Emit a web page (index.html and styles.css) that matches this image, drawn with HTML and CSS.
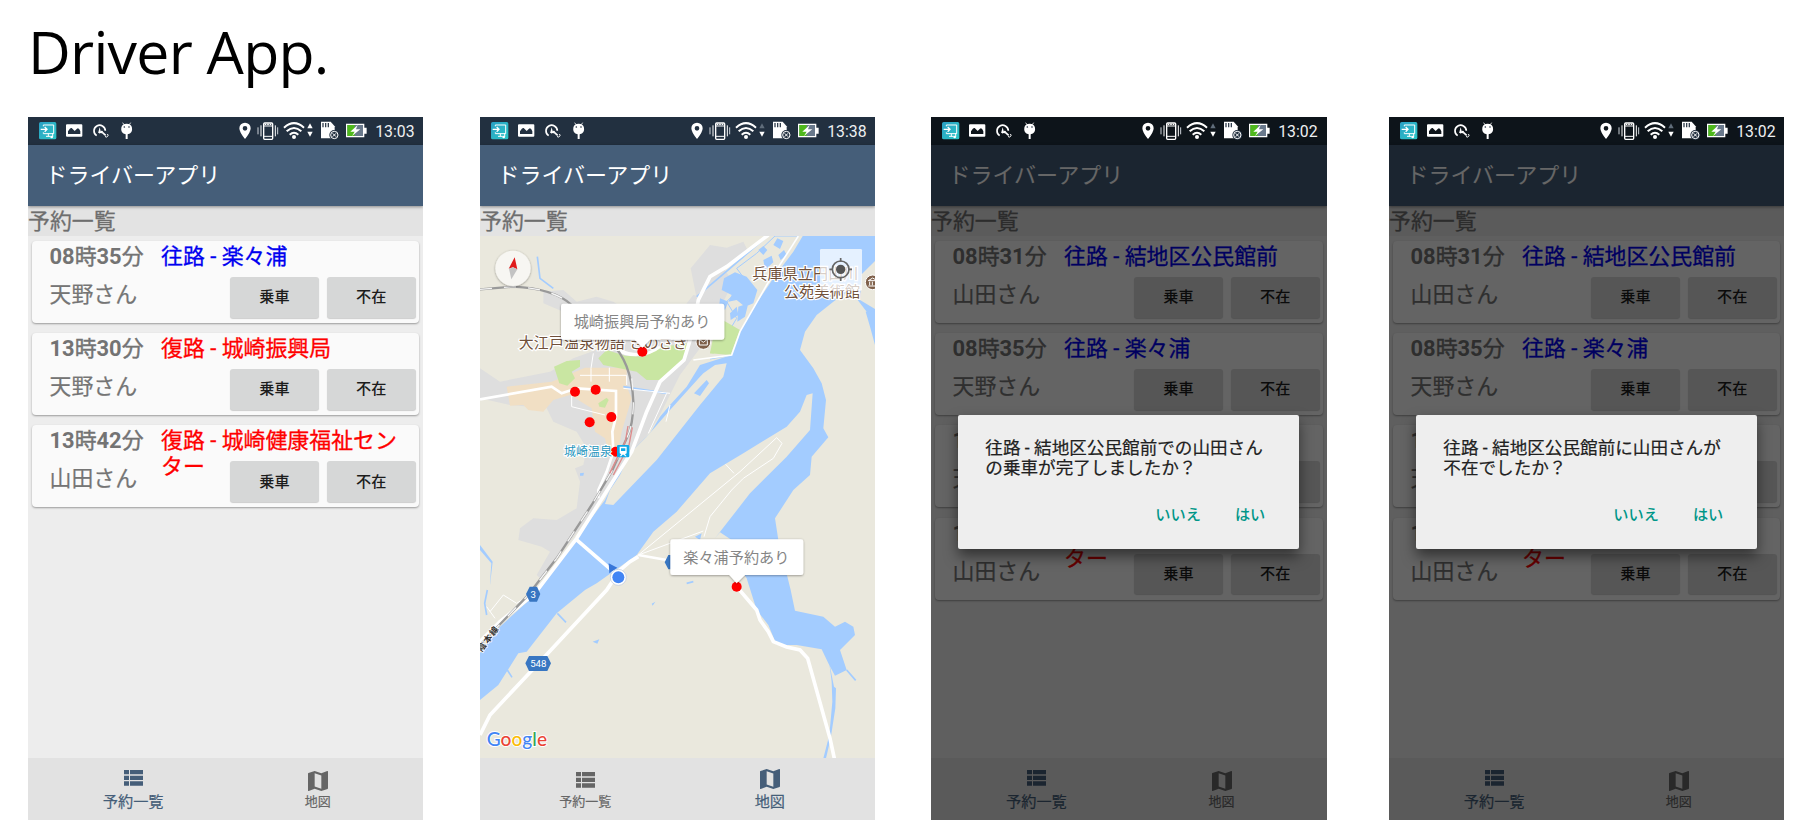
FILE: index.html
```html
<!DOCTYPE html>
<html lang="ja">
<head>
<meta charset="utf-8">
<title>Driver App.</title>
<link rel="stylesheet" href="styles.css">
</head>
<body>
<svg class="defs" width="0" height="0" aria-hidden="true">
  <defs>
    <linearGradient id="teal" x1="0" y1="0" x2="1" y2="1"><stop offset="0" stop-color="#2a9fc4"/><stop offset="1" stop-color="#2bc6c6"/></linearGradient>
    <symbol id="status-left" viewBox="0 0 330 82">
      <rect x="33" y="15" width="52" height="52" rx="5" fill="url(#teal)"/>
      <path d="M46 28V24H77V50H46V46M54 58H68M61 50V58" fill="none" stroke="#fff" stroke-width="3"/>
      <path d="M38 37H56M50 30L57 37L50 44" fill="none" stroke="#fff" stroke-width="4"/>
      <circle cx="71" cy="60" r="4" fill="#fff"/><path d="M74 60V48" stroke="#fff" stroke-width="3"/>
      <path fill="#fff" fill-rule="evenodd" d="M117 22H160Q163 22 163 25V56Q163 59 160 59H117Q114 59 114 56V25Q114 22 117 22ZM120 51H157V43Q152 30 147 35L140 42L131 33Q127 31 120 43Z"/>
      <path d="M206 56A17 17 0 1 1 232 41" fill="none" stroke="#fff" stroke-width="5"/>
      <path d="M215 31L211 46Q215 53 219 46Z" fill="#fff"/>
      <path d="M223 46L233 55" stroke="#fff" stroke-width="5"/>
      <circle cx="221" cy="45" r="4" fill="#fff"/><path d="M238 51A5 5 0 1 1 231 58" fill="none" stroke="#fff" stroke-width="3"/>
      <path d="M280 32Q282 20 296 20Q310 20 312 32Q315 48 299 52V66H293V52Q277 48 280 32Z" fill="#fff"/>
      <path d="M284 17L288 23M308 17L304 23" stroke="#fff" stroke-width="2.5"/>
      <circle cx="289" cy="30" r="2.5" fill="#223040"/><circle cx="303" cy="30" r="2.5" fill="#223040"/>
    </symbol>
    <symbol id="status-right" viewBox="620 0 405 82">
      <path fill="#fff" fill-rule="evenodd" d="M650 17A17 17 0 0 1 667 34Q667 46 650 66Q633 46 633 34A17 17 0 0 1 650 17ZM650 27A7 7 0 1 0 650 41A7 7 0 1 0 650 27Z"/>
      <rect x="706" y="18" width="27" height="49" rx="3" fill="none" stroke="#fff" stroke-width="4"/>
      <path d="M706 27H733M706 58H733" stroke="#fff" stroke-width="3"/>
      <path d="M709 22H729" stroke="#fff" stroke-width="4" stroke-dasharray="5 2.5"/>
      <path d="M698 25V58M741 25V58" stroke="#fff" stroke-width="3"/>
      <path d="M689 31V52M748 31V52" stroke="#cfd4da" stroke-width="3"/>
      <g fill="none" stroke="#fff" stroke-width="6"><path d="M767 32Q797 5 827 32"/><path d="M775 43Q797 23 819 43"/><path d="M784 53Q797 42 810 53"/></g>
      <circle cx="797" cy="60" r="6" fill="#fff"/>
      <path class="uplink" d="M845 19L853 34H837Z"/><path d="M845 59L853 44H837Z" fill="#fff"/>
      <path d="M878 14H907L919 28V64H878Z" fill="#fff"/>
      <path d="M884 18V31M892 18V31M900 18V31" stroke="#33404f" stroke-width="4"/>
      <circle cx="918" cy="54" r="15" fill="#223040"/><circle cx="918" cy="54" r="11" fill="none" stroke="#fff" stroke-width="3"/>
      <path d="M913 49L923 59M923 49L913 59" stroke="#fff" stroke-width="3"/>
      <path d="M955 20H1008V32H1015V50H1008V61H953V20Z" fill="#fff"/>
      <rect x="957" y="24" width="47" height="33" fill="#69798c"/><rect x="957" y="24" width="22" height="33" fill="#4fb81c"/>
      <path d="M988 24L966 44H979L971 57L996 37H983Z" fill="#fff"/>
    </symbol>
    <symbol id="list" viewBox="0 0 57 48"><path fill="currentColor" d="M0 0H15V13H0ZM18 0H57V13H18ZM0 17H15V30H0ZM18 17H57V30H18ZM0 34H15V47H0ZM18 34H57V47H18Z"/></symbol>
    <symbol id="map" viewBox="3 3 18 18"><path fill="currentColor" d="M20.5 3l-.16.03L15 5.1 9 3 3.36 4.9c-.21.07-.36.25-.36.48V20.5c0 .28.22.5.5.5l.16-.03L9 18.9l6 2.1 5.64-1.9c.21-.07.36-.25.36-.48V3.500c0-.28-.22-.5-.5-.5zM15 19l-6-2.11V5l6 2.110V19z"/></symbol>
  </defs>
</svg>

<h1 class="title">Driver App.</h1>
<main class="phones">

  <section class="phone phone-1">
    <div class="status"><svg class="st-l"><use href="#status-left"/></svg><svg class="st-r"><use href="#status-right"/></svg><span class="clock">13:03</span></div>
    <div class="appbar">ドライバーアプリ</div>
    <div class="heading">予約一覧</div>
    <div class="list">
      <article class="card"><div class="time"><b>08</b>時<b>35</b>分</div><div class="route out">往路 - 楽々浦</div><div class="name">天野さん</div><div class="actions"><button>乗車</button><button>不在</button></div></article>
      <article class="card"><div class="time"><b>13</b>時<b>30</b>分</div><div class="route back">復路 - 城崎振興局</div><div class="name">天野さん</div><div class="actions"><button>乗車</button><button>不在</button></div></article>
      <article class="card"><div class="time"><b>13</b>時<b>42</b>分</div><div class="route back">復路 - 城崎健康福祉センター</div><div class="name">山田さん</div><div class="actions"><button>乗車</button><button>不在</button></div></article>
    </div>
    <nav class="nav"><div class="tab active"><svg class="i-list"><use href="#list"/></svg><span>予約一覧</span></div><div class="tab"><svg class="i-map"><use href="#map"/></svg><span>地図</span></div></nav>
  </section>

  <section class="phone phone-2">
    <div class="status"><svg class="st-l"><use href="#status-left"/></svg><svg class="st-r"><use href="#status-right"/></svg><span class="clock">13:38</span></div>
    <div class="appbar">ドライバーアプリ</div>
    <div class="heading">予約一覧</div>
    <svg class="mapview" viewBox="0 3 1185 1566" preserveAspectRatio="none">
      <defs><filter id="sh" x="-10%" y="-20%" width="120%" height="150%"><feDropShadow dx="0" dy="2" stdDeviation="3" flood-opacity=".4"/></filter></defs>
      <rect width="1185" height="1570" fill="#eae8dd"/>
      <!-- built-up land -->
      <g fill="#dedede">
        <path d="M632 100L690 30L740 38L790 20L805 50L730 100L760 140L700 260L660 340L600 420L540 540L450 680L370 790L270 920L185 1035L170 1020L210 950L185 935L115 915L120 880L160 850L230 855L290 820L300 740L285 700L310 690L320 640L290 590L220 560L200 520L90 510L0 490V400L60 440L210 410L280 370L390 330L500 300L650 190Z"/>
        <path d="M190 170L250 165L290 200L350 185L400 200L450 230H600L640 180L720 200L650 330L420 350L250 230L190 205Z"/>
      </g>
      <path fill="#f1dfc4" d="M80 455L215 440L315 398H440V455L455 490L440 540L425 590L415 650H385L375 610L345 590L335 520L270 480L220 495L190 530L145 525L130 510L90 512Z"/>
      <g fill="#c9e6a2">
        <path d="M222 395L260 378L300 375V395L275 410L285 430L262 452L238 445Z"/>
        <path d="M355 370L380 345L435 362L490 365L550 335L620 325L615 370L540 435H500L470 410L370 390Z"/>
        <path d="M710 255L782 290L752 360L690 355Z"/><path d="M355 505L380 488L386 495L375 518L358 515Z"/>
      </g>
      <!-- river -->
      <path fill="#a3ccff" d="M970 0L940 50L880 130L820 220L780 290L755 360L660 390L620 455L570 510L540 545L510 595L450 655L400 745L375 795L330 855L280 915L175 1070L60 1175L0 1255V1395L55 1350L115 1255L140 1250L230 1135L315 1065L350 1045L470 960L520 890L590 830L690 715L790 655L920 575L960 530L980 480L998 475L990 585L920 665L810 775L705 910L720 892L755 915L780 1000L800 1030L830 1125L865 1170L890 1230L950 1230L1025 1243L1045 1285L1065 1322L1100 1305L1080 1245L1125 1200L1120 1175L1095 1160L1065 1175L1030 1145L945 1127L932 1065L895 915L885 850L940 765L990 720L995 665L1045 607L1030 580L1038 495L1025 445L1000 400L960 345L975 290L1010 240L1060 200L1110 165L1160 230L1185 265V0Z"/>
      <path fill="#eae8dd" d="M1185 78L1145 118L1140 195L1185 222Z"/>
      <path fill="#a3ccff" d="M1157 230L1185 228V330Q1172 280 1157 230Z"/>
      <path fill="#eae8dd" d="M670 415L705 390L740 385L730 425L660 510L530 675L400 810L375 807L390 765L420 720L450 655L500 605L570 525L660 425Z"/>
      <path fill="#eae8dd" stroke="#a3ccff" stroke-width="3" d="M690 372L755 360L780 290L860 150L935 35L955 3H885L830 55L770 100L800 140L740 200L770 250L740 300"/>
      <path fill="#c9e6a2" d="M728 255L780 285L752 360L690 355Z"/>
      <path fill="#a3ccff" d="M680 435L687 445L660 483L642 475ZM732 130L765 112L800 125L832 165L820 205L795 215L770 195L745 200L755 180L725 165ZM835 45L850 33L862 45L850 60ZM880 30L892 10L910 18L900 42ZM850 75L875 62L880 82L855 105ZM895 60L912 45L920 60L902 75ZM775 215L805 205L795 245L772 260ZM750 235L770 215L775 240L752 255ZM720 190L745 200L735 225L718 210ZM1048 1285L1062 1355L1068 1360L1066 1420L1052 1510L1038 1570H1030L1048 1500L1057 1400L1055 1340ZM0 930L38 980L30 1050L30 1045L34 985L0 945ZM338 1220L358 1213L352 1226ZM300 715L312 713L310 722L300 722ZM515 1106L526 1100L518 1112ZM645 905L665 895L660 915Z"/>
      <path fill="none" stroke="#fff" stroke-width="5" d="M955 3L935 35L860 150L820 220L780 290L755 360L640 375"/>
      <path fill="none" stroke="#a3ccff" stroke-width="5" d="M172 65L180 130L220 160M860 5L750 100L650 185M430 455L560 475M232 1135L258 1162M640 1040L620 1045M82 1305L96 1327M1100 1305L1127 1336M22 1065L14 1105L20 1140"/>
      <!-- minor roads -->
      <g fill="none" stroke="#fff">
        <path stroke-width="3" d="M475 960L780 710L890 608L906 625L880 670L790 730L755 765L690 845L672 905M737 688L762 715M670 888L475 960M340 355L333 400V440M300 421H440V450M388 398V440M275 470V515L375 540M430 460L570 475M30 1130L70 1080L110 1105L180 1060M20 1115L45 1150M560 475L505 595M570 510L558 560"/>
        <path stroke-width="8" d="M0 493L215 455L245 475L290 460L408 468V545L397 590L400 650L380 710L355 765V790M470 360Q430 360 415 345M415 345Q490 375 540 335M475 960L560 975"/>
        <path stroke-width="11" d="M865 0L740 95L690 125L655 195L635 300L612 375L540 440L500 530L455 650L290 910L165 1075L60 1160L0 1220M285 910L400 1010M0 1500L30 1440L180 1280L380 1065L420 1005L450 980L475 965M770 1055L830 1125L840 1155L865 1190L880 1220L920 1236L960 1245L983 1270L1050 1510L1063 1570"/>
      </g>
      <!-- railway -->
      <g fill="none"><path stroke="#999" stroke-width="7" d="M0 163L100 155Q220 160 275 210L390 320Q455 380 460 500Q460 570 440 610L395 710L335 810L230 970L140 1085L0 1230"/>
      <path stroke="#f5f5f5" stroke-width="4" stroke-dasharray="36 36" d="M0 163L100 155Q220 160 275 210M455 430Q460 470 460 500Q460 570 440 610L395 710L335 810L230 970L140 1085L0 1230"/>
      <path stroke="#de8b8b" stroke-width="4" d="M444 573L436 620L389 715M457 577L447 630L400 720"/></g>
      <!-- place labels -->
      <g class="poi"><text x="817" y="132" textLength="318">兵庫県立円山川</text><text x="912" y="186" textLength="228">公苑美術館</text><text x="116" y="338" textLength="318">大江戸温泉物語</text><text x="448" y="338" textLength="175">きのさき</text></g>
      <g stroke="#fff" stroke-width="3"><circle cx="670" cy="321" r="22" fill="#7f604a"/><circle cx="1178" cy="142" r="22" fill="#7f604a"/></g>
      <path fill="none" stroke="#fff" stroke-width="3" d="M658 330V313L670 322L682 313V330ZM1165 137L1178 129L1191 137ZM1169 140V151M1177 140V151M1165 153H1185"/>
      <g fill="red"><circle cx="487" cy="350" r="15"/><circle cx="285" cy="470" r="15"/><circle cx="347" cy="464" r="15"/><circle cx="329" cy="562" r="15"/><circle cx="394" cy="546" r="15"/><circle cx="407" cy="650" r="15"/><circle cx="770" cy="1055" r="15"/></g>
      <text class="station" x="252" y="662" textLength="144">城崎温泉</text>
      <rect x="411" y="630" width="37" height="37" rx="4" fill="#10a9e8"/><path fill="#fff" fill-rule="evenodd" d="M419 635H440V655L435 658L440 664H435L432 659H427L424 664H419L424 658L419 655ZM423 640V648H436V640Z"/>
      <g class="shield"><path d="M149 1055H171L181 1077L171 1100H149L138 1077ZM147 1263H202L213 1285L202 1308H147L136 1285ZM565 960H590V1003H565L554 982Z" fill="#3876c2"/><text x="160" y="1088">3</text><text x="175" y="1296">548</text></g>
      <text class="rail" transform="translate(5 1252) rotate(-53)" textLength="86">陰本線</text>
      <path d="M386 985L412 998L388 1015Z" fill="#3876d8"/><circle cx="415" cy="1027" r="24" fill="#fff" stroke="#b9c6dc" stroke-width="2"/><circle cx="415" cy="1027" r="18" fill="#4285f4"/>
      <!-- info windows -->
      <path filter="url(#sh)" fill="#fff" d="M250 206H726Q733 206 733 213V307Q733 314 726 314H510L487 338L464 314H250Q243 314 243 307V213Q243 206 250 206ZM578 913H963Q970 913 970 920V1013Q970 1020 963 1020H795L770 1045L748 1020H578Q571 1020 571 1013V920Q571 913 578 913Z"/>
      <g class="info"><text x="281" y="276" textLength="410">城崎振興局予約あり</text><text x="610" y="983" textLength="318">楽々浦予約あり</text></g>
      <!-- compass and location controls -->
      <circle cx="99" cy="100" r="53" fill="#f7f6f2" filter="url(#sh)"/><path d="M104 67L86 101L99 97L112 103Z" fill="#e01b1b"/><path d="M87 101L99 97L112 103L94 133Z" fill="#c3c3c3"/>
      <rect x="1020" y="42" width="126" height="125" rx="4" fill="#fff" fill-opacity=".72"/>
      <g fill="none" stroke="#666" stroke-width="5"><circle cx="1082" cy="103" r="25"/><path d="M1082 69V80M1082 126V138M1048 103H1059M1105 103H1116"/></g><circle cx="1082" cy="103" r="14" fill="#555"/>
      <text class="logo" x="20" y="1532" textLength="181" lengthAdjust="spacingAndGlyphs"><tspan fill="#4285f4" stroke="#4285f4">G</tspan><tspan fill="#ea4335">o</tspan><tspan fill="#fbbc05">o</tspan><tspan fill="#4285f4">g</tspan><tspan fill="#34a853">l</tspan><tspan fill="#ea4335">e</tspan></text>
    </svg>
    <nav class="nav"><div class="tab"><svg class="i-list"><use href="#list"/></svg><span>予約一覧</span></div><div class="tab active"><svg class="i-map"><use href="#map"/></svg><span>地図</span></div></nav>
  </section>

  <section class="phone phone-3 dimmed">
    <div class="status"><svg class="st-l"><use href="#status-left"/></svg><svg class="st-r"><use href="#status-right"/></svg><span class="clock">13:02</span></div>
    <div class="appbar">ドライバーアプリ</div>
    <div class="heading">予約一覧</div>
    <div class="list">
      <article class="card"><div class="time"><b>08</b>時<b>31</b>分</div><div class="route out">往路 - 結地区公民館前</div><div class="name">山田さん</div><div class="actions"><button>乗車</button><button>不在</button></div></article>
      <article class="card"><div class="time"><b>08</b>時<b>35</b>分</div><div class="route out">往路 - 楽々浦</div><div class="name">天野さん</div><div class="actions"><button>乗車</button><button>不在</button></div></article>
      <article class="card"><div class="time"><b>13</b>時<b>30</b>分</div><div class="route back">復路 - 城崎振興局</div><div class="name">天野さん</div><div class="actions"><button>乗車</button><button>不在</button></div></article>
      <article class="card"><div class="time"><b>13</b>時<b>42</b>分</div><div class="route back">復路 - 城崎健康福祉センター</div><div class="name">山田さん</div><div class="actions"><button>乗車</button><button>不在</button></div></article>
    </div>
    <nav class="nav"><div class="tab active"><svg class="i-list"><use href="#list"/></svg><span>予約一覧</span></div><div class="tab"><svg class="i-map"><use href="#map"/></svg><span>地図</span></div></nav>
    <div class="scrim"></div>
    <div class="dialog"><p>往路 - 結地区公民館前での山田さん<br>の乗車が完了しましたか？</p><div class="choices"><span>いいえ</span><span>はい</span></div></div>
  </section>

  <section class="phone phone-4 dimmed">
    <div class="status"><svg class="st-l"><use href="#status-left"/></svg><svg class="st-r"><use href="#status-right"/></svg><span class="clock">13:02</span></div>
    <div class="appbar">ドライバーアプリ</div>
    <div class="heading">予約一覧</div>
    <div class="list">
      <article class="card"><div class="time"><b>08</b>時<b>31</b>分</div><div class="route out">往路 - 結地区公民館前</div><div class="name">山田さん</div><div class="actions"><button>乗車</button><button>不在</button></div></article>
      <article class="card"><div class="time"><b>08</b>時<b>35</b>分</div><div class="route out">往路 - 楽々浦</div><div class="name">天野さん</div><div class="actions"><button>乗車</button><button>不在</button></div></article>
      <article class="card"><div class="time"><b>13</b>時<b>30</b>分</div><div class="route back">復路 - 城崎振興局</div><div class="name">天野さん</div><div class="actions"><button>乗車</button><button>不在</button></div></article>
      <article class="card"><div class="time"><b>13</b>時<b>42</b>分</div><div class="route back">復路 - 城崎健康福祉センター</div><div class="name">山田さん</div><div class="actions"><button>乗車</button><button>不在</button></div></article>
    </div>
    <nav class="nav"><div class="tab active"><svg class="i-list"><use href="#list"/></svg><span>予約一覧</span></div><div class="tab"><svg class="i-map"><use href="#map"/></svg><span>地図</span></div></nav>
    <div class="scrim"></div>
    <div class="dialog"><p>往路 - 結地区公民館前に山田さんが<br>不在でしたか？</p><div class="choices"><span>いいえ</span><span>はい</span></div></div>
  </section>
</main>
</body>
</html>
```
FILE: styles.css
```css
* { box-sizing: border-box; }
body { margin: 0; width: 1801px; height: 837px; overflow: hidden; background: #fff; font-family: Roboto, "Noto Sans CJK JP", sans-serif; }
.defs { display: block; }
.title { margin: 0; height: 117px; padding-left: 28px; font: 400 59px/102px "Open Sans", "Noto Sans", sans-serif; letter-spacing: -0.75px; color: #000; white-space: nowrap; }
.phones { display: flex; align-items: flex-start; padding-left: 28px; }
.phone { --uplink: #5f6c7a; position: relative; display: flex; flex-direction: column; flex: none; width: 395px; height: 703px; overflow: hidden; background: #ededed; }
.phone-1 { --uplink: #fff; }
.phone-2 { margin-left: 57px; }
.phone-3 { margin-left: 56px; width: 396px; }
.phone-4 { margin-left: 62px; }
.status { display: flex; flex: none; height: 28px; background: #223040; }
.st-l { width: 110px; height: 27.33px; }
.st-r { width: 135px; height: 27.33px; margin-left: 96.700px; }
.uplink { fill: var(--uplink); }
.clock { margin-left: 5.500px; font-size: 15.800px; line-height: 29px; color: #eef0f2; }
.appbar { position: relative; flex: none; height: 61px; padding-left: 17.500px; background: #455e79; color: #fff; font-size: 22px; line-height: 61px; box-shadow: 0 1px 3px rgba(0,0,0,.4); }
.heading { flex: none; height: 30px; background: #e3e3e3; color: #6e6e6e; font-size: 21.900px; line-height: 31px; -webkit-text-stroke: .3px; }
.list { display: flex; flex: 1; flex-direction: column; gap: 10.200px; padding: 5px 4px 0; }
.card { display: grid; grid-template: 31px 51px / 111.500px 1fr; flex: none; height: 82px; padding-left: 17.500px; border-radius: 4px; background: #fafafa; box-shadow: 0 1px 2px rgba(0,0,0,.35); font-size: 21.900px; }
.time { color: #737373; line-height: 31px; -webkit-text-stroke: .4px #737373; white-space: nowrap; }
.time b { font-weight: 700; -webkit-text-stroke: 0; }
.route { height: 31px; padding: 3px 16px 0 0; line-height: 25.300px; -webkit-text-stroke: .3px; }
.out { color: #0000f0; }
.back { color: #f00; }
.name { color: #757575; line-height: 46px; -webkit-text-stroke: .2px; }
.actions { display: flex; gap: 8px; justify-content: flex-end; padding: 5px 3.500px 0 0; }
.actions button { width: 88.700px; height: 40.500px; padding: 0; border: 0; border-radius: 3px; background: #d6d7d7; box-shadow: 0 1px 1px rgba(0,0,0,.18); color: #1c1c1c; font: 500 15.200px/40px Roboto, "Noto Sans CJK JP", sans-serif; }
.nav { display: flex; flex: none; height: 62px; margin-top: auto; padding: 0 12.800px; background: #e2e2e2; }
.tab { display: flex; flex: 1; flex-direction: column; align-items: center; padding-top: 14px; color: #666; font-size: 13px; }
.tab span { line-height: 18px; margin-top: auto; margin-bottom: 9px; -webkit-text-stroke: .2px; }
.tab.active { padding-top: 12px; color: #455e79; font-size: 15.200px; }
.tab.active span { line-height: 20px; margin-bottom: 8px; }
.i-list { width: 19px; height: 16px; }
.i-map { width: 20px; height: 20px; margin-top: -1px; }
.mapview { display: block; flex: none; width: 395px; height: 522px; }
.poi { font-size: 45px; fill: #70503a; stroke: #fff; stroke-width: 7px; paint-order: stroke; }
.station { font-size: 36px; fill: #2695bd; stroke: #fff; stroke-width: 6px; paint-order: stroke; }
.shield text { font-size: 29px; fill: #fff; text-anchor: middle; }
.rail { font-size: 26px; fill: #333; stroke: #fff; stroke-width: 4px; paint-order: stroke; font-weight: 700; }
.info { font-size: 45.500px; fill: #858585; }
.logo { font-family: Lato, sans-serif; font-size: 60px; font-weight: 400; }
.logo tspan { stroke: #fff; stroke-width: 6px; paint-order: stroke; font-weight: 500; }
.scrim { position: absolute; inset: 28px 0 0; background: rgba(0,0,0,.6); }
.dimmed .status { background: #0d141a; }
.dialog { position: absolute; left: 27.300px; top: 297.600px; display: flex; flex-direction: column; width: 341px; height: 134.500px; padding: 23px 26.500px 24px 27px; border-radius: 2px; background: #eee; box-shadow: 0 7px 14px rgba(0,0,0,.5); }
.dialog p { margin: 0; color: #212121; font-size: 17.600px; line-height: 20.600px; white-space: nowrap; -webkit-text-stroke: .2px; }
.choices { display: flex; justify-content: flex-end; gap: 34px; margin-top: auto; padding-right: 7.500px; color: #009688; font-size: 15.200px; font-weight: 500; line-height: 20px; }
```
